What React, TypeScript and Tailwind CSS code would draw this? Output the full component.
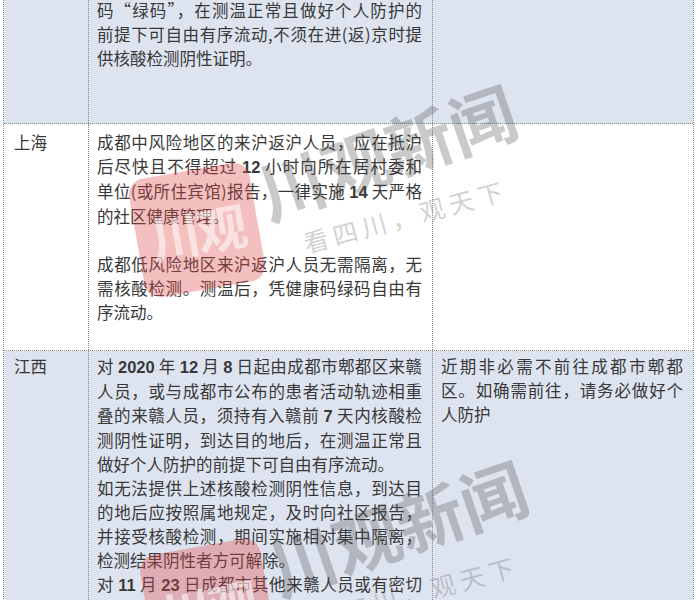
import React from 'react';

type Para = { lines: string[]; justifyLast?: boolean };

// digits in the source sheet are set in a heavier latin face
function Digits({ text }: { text: string }) {
  const parts = text.split(/(\d+)/);
  return (
    <>
      {parts.map((p, i) =>
        /^\d+$/.test(p) ? (
          <span key={i} className="font-['Liberation_Sans',sans-serif] font-bold">
            {p}
          </span>
        ) : (
          <React.Fragment key={i}>{p}</React.Fragment>
        )
      )}
    </>
  );
}

function Lines({ paras }: { paras: Para[] }) {
  return (
    <>
      {paras.map((para, pi) =>
        para.lines.map((line, li) => {
          const last = li === para.lines.length - 1 && !para.justifyLast;
          if (line === '') return <div key={`${pi}-${li}`} className="h-[24px]" />;
          return (
            <div
              key={`${pi}-${li}`}
              className={last ? 'text-left' : 'text-justify [text-align-last:justify]'}
            >
              <Digits text={line} />
            </div>
          );
        })
      )}
    </>
  );
}

function Row({
  blue,
  name,
  policy,
  advice,
  className,
  padTop,
}: {
  blue?: boolean;
  name?: string;
  policy: Para[];
  advice?: Para[];
  className: string;
  padTop: string;
}) {
  return (
    <div
      className={`grid grid-cols-[85px_344px_260px] border-b border-dotted border-[#8c8c8c] overflow-hidden ${
        blue ? 'bg-[#dde4f0]' : 'bg-white'
      } ${className}`}
    >
      <div className={`pl-[10px] border-r border-dotted border-[#8c8c8c] ${padTop}`}>{name}</div>
      <div className={`pl-[8px] pr-[10px] border-r border-dotted border-[#8c8c8c] ${padTop}`}>
        <Lines paras={policy} />
      </div>
      <div className={`pl-[8px] pr-[10px] ${padTop}`}>{advice && <Lines paras={advice} />}</div>
    </div>
  );
}

function Watermark({ className }: { className: string }) {
  return (
    <div className={`absolute pointer-events-none ${className}`}>
      <div className="absolute left-[136px] top-[170px] w-[122px] h-[120px] rotate-[-10deg] rounded-[16px] bg-[#e04848]/35 flex items-center justify-center">
        <span className="text-[50px] leading-none font-bold text-white/55 tracking-[-3px]">川观</span>
      </div>
      <div className="absolute left-[252px] top-[110px] w-[280px] rotate-[-19deg] text-[67px] leading-[76px] font-bold text-[#505050]/30 whitespace-nowrap">
        川观新闻
      </div>
      <div className="absolute left-[300px] top-[200px] w-[215px] rotate-[-15deg] text-[25px] leading-[30px] text-[#606060]/30 whitespace-nowrap tracking-[5px] font-['Noto_Sans_CJK_SC',serif]">
        看四川，观天下
      </div>
    </div>
  );
}

export default function App() {
  return (
    <div
      lang="zh-CN"
      className="relative w-[700px] h-[600px] overflow-hidden bg-white text-[16.5px] leading-[24px] text-[#383838] font-['Noto_Sans_CJK_SC','Noto_Sans_CJK_JP',sans-serif]"
    >
      <div className="ml-[3px] w-[691px] border-x border-dotted border-[#8c8c8c]">
        <Row
          blue
          className="h-[124px]"
          padTop="-mt-[2px]"
          policy={[
            {
              lines: [
                '码“绿码”，在测温正常且做好个人防护的',
                '前提下可自由有序流动,不须在进(返)京时提',
                '供核酸检测阴性证明。',
              ],
            },
          ]}
        />
        <Row
          name="上海"
          className="h-[227px]"
          padTop="pt-[6px]"
          policy={[
            {
              lines: [
                '成都中风险地区的来沪返沪人员，应在抵沪',
                '后尽快且不得超过 12 小时向所在居村委和',
                '单位(或所住宾馆)报告，一律实施 14 天严格',
                '的社区健康管理。',
              ],
            },
            { lines: [''] },
            {
              lines: [
                '成都低风险地区来沪返沪人员无需隔离，无',
                '需核酸检测。测温后，凭健康码绿码自由有',
                '序流动。',
              ],
            },
          ]}
        />
        <Row
          blue
          name="江西"
          className="h-[260px]"
          padTop="pt-[3px]"
          policy={[
            {
              lines: [
                '对 2020 年 12 月 8 日起由成都市郫都区来赣',
                '人员，或与成都市公布的患者活动轨迹相重',
                '叠的来赣人员，须持有入赣前 7 天内核酸检',
                '测阴性证明，到达目的地后，在测温正常且',
                '做好个人防护的前提下可自由有序流动。',
              ],
            },
            {
              lines: [
                '如无法提供上述核酸检测阴性信息，到达目',
                '的地后应按照属地规定，及时向社区报告，',
                '并接受核酸检测，期间实施相对集中隔离，',
                '检测结果阴性者方可解除。',
              ],
            },
            { lines: ['对 11 月 23 日成都市其他来赣人员或有密切'], justifyLast: true },
          ]}
          advice={[
            {
              lines: ['近期非必需不前往成都市郫都', '区。如确需前往，请务必做好个', '人防护'],
            },
          ]}
        />
      </div>

      <Watermark className="left-0 top-0" />
      <Watermark className="left-[11px] top-[376px]" />
    </div>
  );
}
